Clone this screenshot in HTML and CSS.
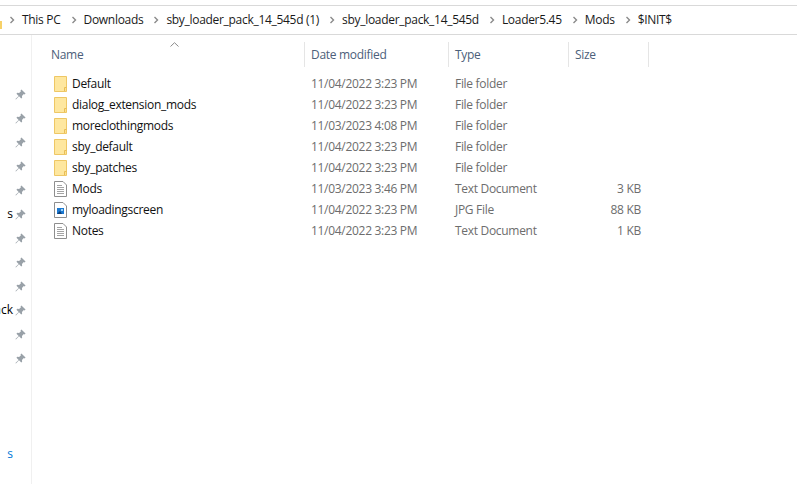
FILE: index.html
```html
<!DOCTYPE html>
<html lang="en">
<head>
<meta charset="utf-8">
<title>$INIT$</title>
<link rel="stylesheet" href="styles.css">
</head>
<body>
<svg class="defs" width="0" height="0" aria-hidden="true">
  <symbol id="chev" viewBox="0 0 6 8"><path d="M1.5 1 L4.5 4 L1.5 7" fill="none" stroke="#8a8a8a" stroke-width="1.4"/></symbol>
  <symbol id="pin" viewBox="0 0 12 12"><path d="M7 0.5 L11.5 5 L10.5 6 L9.6 5.5 L7.6 7.5 L7.8 9.6 L6.8 10.4 L4.4 8 L1 11.5 L0.5 11 L4 7.6 L1.6 5.2 L2.4 4.2 L4.5 4.4 L6.5 2.4 L6 1.5 Z" fill="#99a1a8"/></symbol>
  <symbol id="folder" viewBox="0 0 13 16"><path d="M0.5 0.5 H12.5 V15.5 H0.5 Z" fill="#fde28f" stroke="#eec765"/><path d="M1 1 H12 V12 H10 V15 H1 Z" fill="#fee79f"/><path d="M10.5 15 V11.5 H12.5" fill="none" stroke="#e8bd57"/></symbol>
  <symbol id="doc" viewBox="0 0 13 16"><path d="M0.5 0.5 H9 L12.5 4 V15.5 H0.5 Z" fill="#fff" stroke="#8e8e8e"/><path d="M3 4.5 H8 M3 6.5 H10 M3 8.5 H10 M3 10.5 H10 M3 12.5 H10" stroke="#a4a4a4"/></symbol>
  <symbol id="jpg" viewBox="0 0 13 16"><path d="M0.5 0.5 H9 L12.5 4 V15.5 H0.5 Z" fill="#fff" stroke="#8e8e8e"/><rect x="3" y="6" width="7" height="6" fill="#1b78d0"/><path d="M3 12 L6 9 L8 12 Z" fill="#0d3f78"/><rect x="7" y="7" width="2" height="2" fill="#9fd4f7"/></symbol>
</svg>

<header class="address">
  <svg class="folder-sliver" width="2" height="8" aria-hidden="true"><rect width="2" height="8" fill="#f7d168"/></svg>
  <ol class="crumbs">
    <li><svg class="chev"><use href="#chev"/></svg><span>This PC</span></li>
    <li><svg class="chev"><use href="#chev"/></svg><span>Downloads</span></li>
    <li><svg class="chev"><use href="#chev"/></svg><span>sby_loader_pack_14_545d (1)</span></li>
    <li><svg class="chev"><use href="#chev"/></svg><span>sby_loader_pack_14_545d</span></li>
    <li><svg class="chev"><use href="#chev"/></svg><span>Loader5.45</span></li>
    <li><svg class="chev"><use href="#chev"/></svg><span>Mods</span></li>
    <li><svg class="chev"><use href="#chev"/></svg><span>$INIT$</span></li>
  </ol>
</header>

<div class="body">
  <nav class="side">
    <div class="nav-row"><svg class="pin"><use href="#pin"/></svg></div>
    <div class="nav-row"><svg class="pin"><use href="#pin"/></svg></div>
    <div class="nav-row"><svg class="pin"><use href="#pin"/></svg></div>
    <div class="nav-row"><svg class="pin"><use href="#pin"/></svg></div>
    <div class="nav-row"><svg class="pin"><use href="#pin"/></svg></div>
    <div class="nav-row"><span class="nav-label">s</span><svg class="pin"><use href="#pin"/></svg></div>
    <div class="nav-row"><svg class="pin"><use href="#pin"/></svg></div>
    <div class="nav-row"><svg class="pin"><use href="#pin"/></svg></div>
    <div class="nav-row"><svg class="pin"><use href="#pin"/></svg></div>
    <div class="nav-row"><span class="nav-label">ack</span><svg class="pin"><use href="#pin"/></svg></div>
    <div class="nav-row"><svg class="pin"><use href="#pin"/></svg></div>
    <div class="nav-row"><svg class="pin"><use href="#pin"/></svg></div>
    <div class="nav-row nav-link"><span class="nav-label">s</span></div>
  </nav>

  <main class="list">
    <div class="sort"><svg width="9" height="5" aria-hidden="true"><path d="M0.5 4.5 L4.5 0.7 L8.5 4.5" fill="none" stroke="#8a8a8a"/></svg></div>
    <div class="row head">
      <div class="c-name">Name</div>
      <div class="c-date">Date modified</div>
      <div class="c-type">Type</div>
      <div class="c-size">Size</div>
    </div>
    <div class="rows">
      <div class="row"><div class="c-name"><svg class="ico"><use href="#folder"/></svg>Default</div><div class="c-date">11/04/2022 3:23 PM</div><div class="c-type">File folder</div><div class="c-size"></div></div>
      <div class="row"><div class="c-name"><svg class="ico"><use href="#folder"/></svg>dialog_extension_mods</div><div class="c-date">11/04/2022 3:23 PM</div><div class="c-type">File folder</div><div class="c-size"></div></div>
      <div class="row"><div class="c-name"><svg class="ico"><use href="#folder"/></svg>moreclothingmods</div><div class="c-date">11/03/2023 4:08 PM</div><div class="c-type">File folder</div><div class="c-size"></div></div>
      <div class="row"><div class="c-name"><svg class="ico"><use href="#folder"/></svg>sby_default</div><div class="c-date">11/04/2022 3:23 PM</div><div class="c-type">File folder</div><div class="c-size"></div></div>
      <div class="row"><div class="c-name"><svg class="ico"><use href="#folder"/></svg>sby_patches</div><div class="c-date">11/04/2022 3:23 PM</div><div class="c-type">File folder</div><div class="c-size"></div></div>
      <div class="row"><div class="c-name"><svg class="ico"><use href="#doc"/></svg>Mods</div><div class="c-date">11/03/2023 3:46 PM</div><div class="c-type">Text Document</div><div class="c-size">3 KB</div></div>
      <div class="row"><div class="c-name"><svg class="ico"><use href="#jpg"/></svg>myloadingscreen</div><div class="c-date">11/04/2022 3:23 PM</div><div class="c-type">JPG File</div><div class="c-size">88 KB</div></div>
      <div class="row"><div class="c-name"><svg class="ico"><use href="#doc"/></svg>Notes</div><div class="c-date">11/04/2022 3:23 PM</div><div class="c-type">Text Document</div><div class="c-size">1 KB</div></div>
    </div>
  </main>
</div>
</body>
</html>
```

FILE: styles.css
```css
* { box-sizing: border-box; }
html, body { margin: 0; height: 100%; }
body {
  width: 797px;
  height: 484px;
  overflow: hidden;
  background: #fff;
  font: 12px/16px "Open Sans", "Noto Sans", sans-serif;
  color: #000;
  padding-top: 5px;
}
.defs { position: absolute; }

.address {
  height: 30px;
  border-top: 1px solid #d9d9d9;
  border-bottom: 1px solid #d9d9d9;
  display: flex;
  align-items: center;
  position: relative;
}
.folder-sliver { position: absolute; left: 0; top: 15px; }
.crumbs {
  list-style: none;
  margin: 0;
  padding: 0 0 0 9px;
  display: flex;
  align-items: center;
  color: #1a1a1a;
  letter-spacing: -0.3px;
}
.crumbs li { display: flex; align-items: center; white-space: nowrap; }
.chev { width: 6px; height: 8px; margin-right: 7px; }
.crumbs li + li .chev { margin-left: 10px; }

.body { display: flex; height: 449px; }

.side {
  width: 32px;
  flex: none;
  border-right: 1px solid #f0f0f0;
  padding-top: 47px;
  overflow: hidden;
}
.nav-row {
  height: 24px;
  display: flex;
  align-items: center;
  justify-content: flex-end;
  padding-right: 5px;
  white-space: nowrap;
  position: relative;
}
.nav-label { position: absolute; right: 18px; }
.nav-link { color: #0078d7; margin-top: 72px; }
.pin { width: 11px; height: 11px; flex: none; }

.list { flex: 1; position: relative; padding-top: 7px; }
.sort { position: absolute; left: 138px; top: 7px; line-height: 0; }
.row {
  display: flex;
  height: 21px;
  align-items: center;
  color: #6d6d6d;
  letter-spacing: -0.3px;
  white-space: nowrap;
}
.head {
  height: 25px;
  margin-bottom: 6px;
  color: #4c607a;
}
.c-name { width: 273px; padding-left: 19px; display: flex; align-items: center; color: #111; }
.c-date { width: 144px; padding-left: 6px; }
.c-type { width: 120px; padding-left: 6px; }
.c-size { width: 80px; padding-right: 8px; text-align: right; }
.head .c-name { color: inherit; }
.head .c-size { text-align: left; padding: 0 0 0 6px; }
.head > div { height: 25px; line-height: 25px; border-right: 1px solid #e5e5e5; display: block; }
.ico { width: 13px; height: 16px; margin-left: 3px; margin-right: 5px; flex: none; }
```
